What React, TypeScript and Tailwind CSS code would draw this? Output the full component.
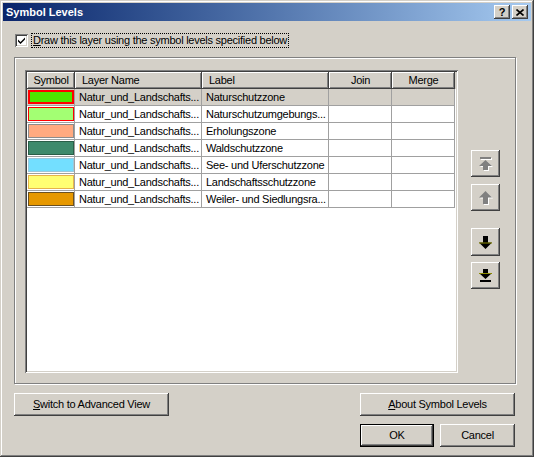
import React from 'react';

const raised =
  'shadow-[inset_-1px_-1px_0_#404040,inset_1px_1px_0_#ffffff,inset_-2px_-2px_0_#808080,inset_2px_2px_0_#d4d0c8]';
const sunken =
  'shadow-[inset_1px_1px_0_#808080,inset_-1px_-1px_0_#ffffff,inset_2px_2px_0_#404040,inset_-2px_-2px_0_#d4d0c8]';
const headerCell =
  'shadow-[inset_-1px_-1px_0_#404040,inset_1px_1px_0_#ffffff,inset_-2px_-2px_0_#808080]';

interface Row {
  layer: string;
  label: string;
  fill: string;
  border: string;
  thick?: boolean;
}

const rows: Row[] = [
  { layer: 'Natur_und_Landschafts...', label: 'Naturschutzzone', fill: '#4ce600', border: '#ff0000', thick: true },
  { layer: 'Natur_und_Landschafts...', label: 'Naturschutzumgebungs...', fill: '#a3ff73', border: '#ff0000' },
  { layer: 'Natur_und_Landschafts...', label: 'Erholungszone', fill: '#ffaa80', border: '#8c8c8c' },
  { layer: 'Natur_und_Landschafts...', label: 'Waldschutzzone', fill: '#3e8a6c', border: '#2a5e48' },
  { layer: 'Natur_und_Landschafts...', label: 'See- und Uferschutzzone', fill: '#73dfff', border: '#9cc8dc' },
  { layer: 'Natur_und_Landschafts...', label: 'Landschaftsschutzzone', fill: '#ffff73', border: '#e6b44c' },
  { layer: 'Natur_und_Landschafts...', label: 'Weiler- und Siedlungsra...', fill: '#e69800', border: '#6b5020' },
];

function Btn({ children, className = '' }: { children: React.ReactNode; className?: string }) {
  return (
    <div className={`flex items-center justify-center bg-[#d4d0c8] ${raised} ${className}`}>{children}</div>
  );
}

function ArrowIcon({ dir, bar, disabled }: { dir: 'up' | 'down'; bar?: boolean; disabled?: boolean }) {
  // 15x15 grid; head is 13 wide, shaft 5 wide
  const up = bar
    ? '7.5,4 14,10 10,10 10,14 5,14 5,10 1,10'
    : '7.5,1 14,7.5 10,7.5 10,14 5,14 5,7.5 1,7.5';
  const down = bar
    ? '7.5,11 14,5 10,5 10,1 5,1 5,5 1,5'
    : '7.5,14 14,7.5 10,7.5 10,1 5,1 5,7.5 1,7.5';
  const pts = dir === 'up' ? up : down;
  const barY = dir === 'up' ? 1 : 12;
  const color = disabled ? '#808080' : '#000000';
  return (
    <svg width="15" height="15" viewBox="0 0 15 15">
      {disabled && (
        <g transform="translate(1,1)" fill="#ffffff">
          <polygon points={pts} />
          {bar && <rect x="2" y={barY} width="11" height="2" />}
        </g>
      )}
      <polygon points={pts} fill={color} />
      {bar && <rect x="2" y={barY} width="11" height="2" fill={color} />}
      {!disabled && <rect x="1" y={bar ? 5 : 7.5} width="13" height="1" fill="#8a8a00" />}
    </svg>
  );
}

export default function App() {
  return (
    <div className="w-[534px] h-[457px] bg-[#d4d0c8] p-[3px] flex flex-col text-[11px] text-black font-['Liberation_Sans',Arial,sans-serif] shadow-[inset_-1px_-1px_0_#404040,inset_1px_1px_0_#d4d0c8,inset_-2px_-2px_0_#808080,inset_2px_2px_0_#ffffff]">
      {/* Title bar */}
      <div className="h-[18px] flex items-center justify-between bg-linear-to-r from-[#0a246a] to-[#a6caf0] pl-[3px] pr-[3px]">
        <span className="text-white font-bold text-[11px] leading-none">Symbol Levels</span>
        <div className="flex gap-[2px]">
          <Btn className="w-[16px] h-[14px] font-bold text-[11px] leading-none">?</Btn>
          <Btn className="w-[16px] h-[14px]">
            <svg width="8" height="7" viewBox="0 0 8 7">
              <path d="M0.5 0.5 L7.5 6.5 M7.5 0.5 L0.5 6.5" stroke="#000" strokeWidth="1.6" />
            </svg>
          </Btn>
        </div>
      </div>

      <div className="ml-[11px] w-[502px] flex flex-col tracking-[-0.25px]">
        {/* Checkbox */}
        <div className="mt-[12px] h-[15px] flex items-center">
          <div className={`ml-[1px] w-[13px] h-[13px] bg-white flex items-center justify-center ${sunken}`}>
            <svg width="7" height="7" viewBox="0 0 7 7">
              <path d="M0 2.5 L2.5 5 L7 0.5 L7 2.5 L2.5 7 L0 4.5 Z" fill="#000" />
            </svg>
          </div>
          <div className="ml-[3px] h-[15px] px-[1px] flex items-center border border-dotted border-black leading-none">
            <span>
              <span className="underline">D</span>raw this layer using the symbol levels specified below
            </span>
          </div>
        </div>

        {/* Group box */}
        <div className="mt-[9px] h-[327px] border border-[#808080] shadow-[inset_1px_1px_0_#ffffff,1px_1px_0_#ffffff] flex pl-[10px] pt-[12px]">
          <div className={`w-[433px] h-[303px] bg-white p-[2px] flex flex-col ${sunken}`}>
            <div className="grid grid-cols-[48px_127px_127px_63px_63px] h-[17px] bg-[#d4d0c8]">
              <div className={`${headerCell} flex items-center justify-center`}>Symbol</div>
              <div className={`${headerCell} flex items-center pl-[7px]`}>Layer Name</div>
              <div className={`${headerCell} flex items-center pl-[7px]`}>Label</div>
              <div className={`${headerCell} flex items-center justify-center`}>Join</div>
              <div className={`${headerCell} flex items-center justify-center`}>Merge</div>
            </div>
            {rows.map((r, i) => {
              const bg = i === 0 ? 'bg-[#d4d0c8]' : 'bg-white';
              const cell = `h-[17px] border-r border-b border-[#a0a0a0] ${bg}`;
              return (
                <div key={i} className="grid grid-cols-[48px_127px_127px_63px_63px]">
                  <div className={`${cell} flex items-center pl-[1px]`}>
                    <div
                      className={`w-[46px] h-[14px] ${r.thick ? 'border-2' : 'border'}`}
                      style={{ backgroundColor: r.fill, borderColor: r.border }}
                    />
                  </div>
                  <div className={`${cell} flex items-center pl-[4px] whitespace-nowrap overflow-hidden`}>{r.layer}</div>
                  <div className={`${cell} flex items-center pl-[4px] whitespace-nowrap overflow-hidden`}>{r.label}</div>
                  <div className={cell} />
                  <div className={cell} />
                </div>
              );
            })}
          </div>

          <div className="ml-[13px] mt-[80px] flex flex-col">
            <Btn className="w-[29px] h-[27px]">
              <ArrowIcon dir="up" bar disabled />
            </Btn>
            <Btn className="w-[29px] h-[27px] mt-[7px]">
              <ArrowIcon dir="up" disabled />
            </Btn>
            <Btn className="w-[29px] h-[28px] mt-[17px]">
              <ArrowIcon dir="down" />
            </Btn>
            <Btn className="w-[29px] h-[27px] mt-[6px]">
              <ArrowIcon dir="down" bar />
            </Btn>
          </div>
        </div>

        {/* Bottom buttons */}
        <div className="mt-[9px] flex justify-between pr-[1px]">
          <Btn className="w-[155px] h-[23px]">
            <span>
              <span className="underline">S</span>witch to Advanced View
            </span>
          </Btn>
          <Btn className="w-[155px] h-[23px]">
            <span>
              <span className="underline">A</span>bout Symbol Levels
            </span>
          </Btn>
        </div>
        <div className="mt-[8px] flex justify-end gap-[6px] pr-[1px]">
          <div className="w-[74px] h-[23px] border border-black">
            <Btn className="w-full h-full">OK</Btn>
          </div>
          <Btn className="w-[75px] h-[23px]">Cancel</Btn>
        </div>
      </div>
    </div>
  );
}
